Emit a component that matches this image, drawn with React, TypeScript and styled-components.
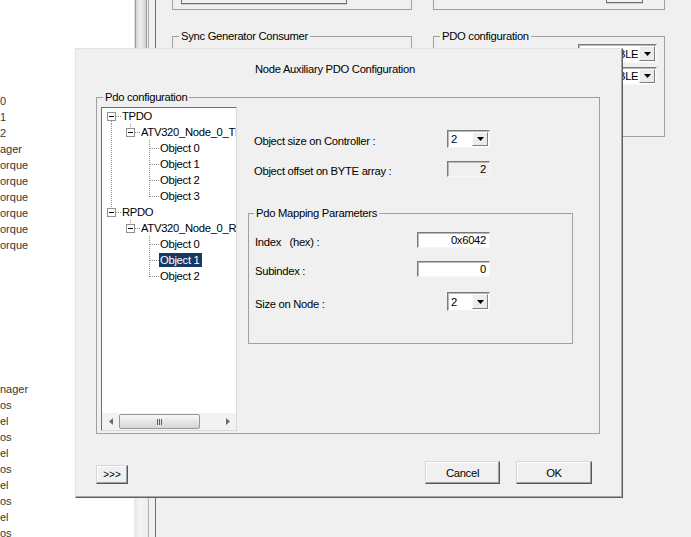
import React from 'react'
import styled, { createGlobalStyle } from 'styled-components'

const UI_FONT = '"Liberation Sans", Arial, sans-serif'

const GlobalStyle = createGlobalStyle`
  html, body {
    margin: 0;
    padding: 0;
    overflow: hidden;
    background: #ffffff;
  }
  body {
    font-family: ${UI_FONT};
    font-size: 11.25px;
    letter-spacing: -0.3px;
    line-height: 14px;
    color: #000;
  }
  * {
    box-sizing: border-box;
  }
`

type Seg = { up?: boolean; down?: boolean; right?: boolean; box?: boolean }

const BLANK: Seg = {}
const PIPE: Seg = { up: true, down: true }
const TEE: Seg = { up: true, down: true, right: true }
const ELBOW: Seg = { up: true, right: true }

const treeRows: { label: string; cells: Seg[]; selected?: boolean }[] = [
  { label: 'TPDO', cells: [{ box: true, down: true, right: true }] },
  { label: 'ATV320_Node_0_TPDO', cells: [PIPE, { box: true, up: true, right: true }] },
  { label: 'Object 0', cells: [PIPE, BLANK, TEE] },
  { label: 'Object 1', cells: [PIPE, BLANK, TEE] },
  { label: 'Object 2', cells: [PIPE, BLANK, TEE] },
  { label: 'Object 3', cells: [PIPE, BLANK, ELBOW] },
  { label: 'RPDO', cells: [{ box: true, up: true, right: true }] },
  { label: 'ATV320_Node_0_RPDO', cells: [BLANK, { box: true, up: true, right: true }] },
  { label: 'Object 0', cells: [BLANK, BLANK, TEE] },
  { label: 'Object 1', cells: [BLANK, BLANK, TEE], selected: true },
  { label: 'Object 2', cells: [BLANK, BLANK, ELBOW] },
]

// what is left visible of the list behind the dialog
const listItems: string[] = [
  '0', '1', '2', 'ager',
  'orque', 'orque', 'orque', 'orque', 'orque', 'orque',
  '', '', '', '', '', '', '', '',
  'nager',
  'os', 'el', 'os', 'el', 'os', 'el', 'os', 'el', 'os',
]

const Screen = styled.div`
  position: relative;
  display: flex;
  width: 691px;
  height: 537px;
  overflow: hidden;
`

const ItemList = styled.div`
  width: 134px;
  flex: none;
  padding-top: 93px;
  background: #ffffff;
  font-family: "Liberation Sans", Arial, sans-serif;
  font-size: 11px;
  letter-spacing: 0;
  color: #363636;
`

const ListRow = styled.div`
  height: 16px;
  line-height: 16px;
  white-space: nowrap;
`

const ScrollColumn = styled.div`
  width: 15px;
  flex: none;
  display: flex;
  flex-direction: column;
  background: linear-gradient(to right, #e6e6e6, #f5f5f5 45%, #ebebeb);
  border-right: 1px solid #b0b0b0;
`

const ScrollThumb = styled.div`
  height: 260px;
  margin: 0 1px;
  background: linear-gradient(to right, #d4d4d4, #eeeeee 45%, #cfcfcf);
  border: 1px solid #9a9a9a;
  border-top: none;
`

const Sash = styled.div`
  width: 7px;
  flex: none;
  background: #f0f0f0;
  border-right: 1px solid #6b6b6b;
`

const Workspace = styled.div`
  flex: 1;
  background: #f0f0f0;
  padding-left: 16px;
  display: grid;
  grid-template-columns: 240px 232px;
  grid-template-rows: 10px auto;
  column-gap: 21px;
  row-gap: 19px;
  align-content: start;
`

const ClippedBox = styled.div`
  display: flex;
  align-items: flex-start;
  border: 1px solid #a0a0a0;
  border-top: none;
`

const ClippedControl = styled.div<{ $left: number; $width: number; $height: number }>`
  margin-left: ${p => p.$left}px;
  width: ${p => p.$width}px;
  height: ${p => p.$height}px;
  background: #f0f0f0;
  border: 1px solid #6f6f6f;
  border-top: none;
  box-shadow: 0 1px 0 #cfcfcf;
`

const GroupBox = styled.fieldset<{ $pad: string; $width?: number; $height?: number }>`
  margin: 0;
  min-width: 0;
  padding: ${p => p.$pad};
  border: 1px solid #a0a0a0;
  ${p => (p.$width ? `width: ${p.$width}px;` : '')}
  ${p => (p.$height ? `height: ${p.$height}px;` : '')}
`

// legend offset is measured from the fieldset's content edge
const GroupTitle = styled.legend<{ $indent: number }>`
  margin-left: ${p => p.$indent}px;
  padding: 0 2px;
  line-height: 14px;
`

const ComboStack = styled.div`
  display: flex;
  flex-direction: column;
  align-items: flex-end;
  gap: 4px;
`

const ComboFrame = styled.div<{ $w: number; $h: number }>`
  display: flex;
  width: ${p => p.$w}px;
  height: ${p => p.$h}px;
  background: #ffffff;
  border: 1px solid;
  border-color: #7a7a7a #f6f6f6 #f6f6f6 #7a7a7a;
  box-shadow: inset 1px 1px 0 #b8b8b8;
`

const ComboText = styled.span`
  flex: 1;
  align-self: center;
  padding-left: 3px;
  overflow: hidden;
  white-space: nowrap;
`

const DropButton = styled.span`
  width: 16px;
  flex: none;
  margin: 1px;
  display: flex;
  align-items: center;
  justify-content: center;
  background: #ececec;
  border: 1px solid;
  border-color: #fdfdfd #7d7d7d #7d7d7d #fdfdfd;
`

const TextField = styled.div<{ $w: number; $h: number; $readOnly?: boolean }>`
  width: ${p => p.$w}px;
  height: ${p => p.$h}px;
  line-height: ${p => p.$h - 2}px;
  padding-right: 3px;
  text-align: right;
  background: ${p => (p.$readOnly ? '#f0f0f0' : '#ffffff')};
  border: 1px solid;
  border-color: #7a7a7a #f6f6f6 #f6f6f6 #7a7a7a;
  box-shadow: inset 1px 1px 0 #b8b8b8;
`

const Dialog = styled.div`
  position: absolute;
  left: 75px;
  top: 48px;
  width: 548px;
  height: 450px;
  display: flex;
  flex-direction: column;
  background: #f0f0f0;
  border: 1px solid;
  border-color: #e2e2e2 #5f5f5f #5f5f5f #e2e2e2;
  box-shadow: inset -1px -1px 0 #a8a8a8;
`

const DialogTitle = styled.div`
  margin-top: 13px;
  padding-left: 179px;
  white-space: nowrap;
`

const ConfigGroup = styled(GroupBox)`
  margin: 14px 22px 0 20px;
  display: flex;
`

const TreeView = styled.div`
  width: 136px;
  height: 324px;
  flex: none;
  display: flex;
  flex-direction: column;
  background: #ffffff;
  border: 1px solid;
  border-color: #6e6e6e #dadada #dadada #6e6e6e;
`

const TreeBody = styled.div`
  flex: 1;
  overflow: hidden;
`

const TreeRow = styled.div`
  display: flex;
  align-items: center;
  height: 16px;
  white-space: nowrap;
`

const GlyphSvg = styled.svg`
  display: block;
  flex: none;
`

const TreeLabel = styled.span<{ $selected?: boolean }>`
  flex: none;
  height: 14px;
  line-height: 14px;
  padding: 0 2px 0 1px;
  background: ${p => (p.$selected ? '#163a64' : 'transparent')};
  color: ${p => (p.$selected ? '#ffffff' : '#000000')};
`

const HScroll = styled.div`
  height: 17px;
  flex: none;
  display: flex;
  background: #f2f2f2;
`

const ScrollArrow = styled.span`
  width: 17px;
  flex: none;
  display: flex;
  align-items: center;
  justify-content: center;
`

const ScrollTrack = styled.div`
  flex: 1;
  display: flex;
  padding: 1px 0;
`

const HThumb = styled.div`
  width: 81px;
  display: flex;
  align-items: center;
  justify-content: center;
  gap: 1px;
  border: 1px solid #979797;
  border-radius: 2px;
  background: linear-gradient(#f8f8f8, #e6e6e6 50%, #d6d6d6);
`

const Grip = styled.span`
  width: 1px;
  height: 6px;
  background: #5a5a5a;
`

const FormArea = styled.div`
  flex: 1;
  display: flex;
  flex-direction: column;
  margin-left: 11px;
  padding-top: 23px;
`

const FormRow = styled.div<{ $gap: number; $indent: number; $width: number }>`
  display: grid;
  grid-template-columns: 1fr auto;
  align-items: start;
  margin-top: ${p => p.$gap}px;
  margin-left: ${p => p.$indent}px;
  width: ${p => p.$width}px;
`

const FieldLabel = styled.span<{ $drop: number }>`
  margin-top: ${p => p.$drop}px;
  white-space: pre;
`

const MappingGroup = styled(GroupBox)`
  margin-top: 28px;
`

const DialogFooter = styled.div`
  margin-top: auto;
  display: flex;
  align-items: flex-end;
  padding: 0 30px 13px 20px;
`

const PushButton = styled.button<{ $w: number; $h: number; $push?: boolean; $small?: boolean }>`
  width: ${p => p.$w}px;
  height: ${p => p.$h}px;
  margin-left: ${p => (p.$push ? 'auto' : '16px')};
  padding: 0;
  font-family: ${UI_FONT};
  font-size: ${p => (p.$small ? '10px' : '11.25px')};
  letter-spacing: ${p => (p.$small ? '0' : '-0.3px')};
  color: #000;
  background: #f0f0f0;
  border: 1px solid;
  border-color: #d6d6d6 #575757 #575757 #d6d6d6;
  box-shadow: inset -1px -1px 0 #a0a0a0, inset 1px 1px 0 #ffffff;

  &:first-child {
    margin-left: 0;
  }
`

const DownTriangle = () => (
  <svg width="7" height="4" viewBox="0 0 7 4">
    <path d="M0 0h7L3.5 4z" fill="#000" />
  </svg>
)

const Combo = ({ value, w, h }: { value: string; w: number; h: number }) => (
  <ComboFrame $w={w} $h={h}>
    <ComboText>{value}</ComboText>
    <DropButton>
      <DownTriangle />
    </DropButton>
  </ComboFrame>
)

const TreeGlyph = ({ seg }: { seg: Seg }) => {
  const c = 9.5
  const m = 8.5
  return (
    <GlyphSvg width="19" height="16" viewBox="0 0 19 16" shapeRendering="crispEdges">
      <g stroke="#8e8e8e" strokeWidth="1" strokeDasharray="1 1">
        {seg.up && <line x1={c} y1={0} x2={c} y2={seg.box ? 4 : 9} />}
        {seg.down && <line x1={c} y1={seg.box ? 13 : 8} x2={c} y2={16} />}
        {seg.right && <line x1={seg.box ? 14 : 10} y1={m} x2={19} y2={m} />}
      </g>
      {seg.box && (
        <>
          <rect x="5.5" y="4.5" width="8" height="8" fill="#fff" stroke="#919191" />
          <line x1="7" y1={m} x2="12" y2={m} stroke="#000" />
        </>
      )}
    </GlyphSvg>
  )
}

const ArrowGlyph = ({ dir }: { dir: 'left' | 'right' }) => (
  <svg width="4" height="7" viewBox="0 0 4 7">
    <path d={dir === 'left' ? 'M4 0v7L0 3.5z' : 'M0 0v7l4-3.5z'} fill="#6a6a6a" />
  </svg>
)

const PdoTree = () => (
  <TreeView>
    <TreeBody>
      {treeRows.map((row, i) => (
        <TreeRow key={i}>
          {row.cells.map((seg, j) => (
            <TreeGlyph key={j} seg={seg} />
          ))}
          <TreeLabel $selected={row.selected}>{row.label}</TreeLabel>
        </TreeRow>
      ))}
    </TreeBody>
    <HScroll>
      <ScrollArrow>
        <ArrowGlyph dir="left" />
      </ScrollArrow>
      <ScrollTrack>
        <HThumb>
          <Grip />
          <Grip />
          <Grip />
        </HThumb>
      </ScrollTrack>
      <ScrollArrow>
        <ArrowGlyph dir="right" />
      </ScrollArrow>
    </HScroll>
  </TreeView>
)

const PdoDialog = () => (
  <Dialog>
    <DialogTitle>Node Auxiliary PDO Configuration</DialogTitle>
    <ConfigGroup $pad="3px 2px 2px 4px">
      <GroupTitle $indent={2}>Pdo configuration</GroupTitle>
      <PdoTree />
      <FormArea>
        <FormRow $gap={0} $indent={6} $width={236}>
          <FieldLabel $drop={4}>Object size on Controller :</FieldLabel>
          <Combo value="2" w={43} h={18} />
        </FormRow>
        <FormRow $gap={13} $indent={6} $width={236}>
          <FieldLabel $drop={3}>Object offset on BYTE array :</FieldLabel>
          <TextField $w={43} $h={16} $readOnly>2</TextField>
        </FormRow>
        <MappingGroup $pad="12px 0 32px 6px" $width={325}>
          <GroupTitle $indent={-1}>Pdo Mapping Parameters</GroupTitle>
          <FormRow $gap={0} $indent={0} $width={235}>
            <FieldLabel $drop={3}>{'Index   (hex) :'}</FieldLabel>
            <TextField $w={73} $h={16}>0x6042</TextField>
          </FormRow>
          <FormRow $gap={12} $indent={0} $width={235}>
            <FieldLabel $drop={3}>Subindex :</FieldLabel>
            <TextField $w={73} $h={16}>0</TextField>
          </FormRow>
          <FormRow $gap={14} $indent={0} $width={235}>
            <FieldLabel $drop={5}>Size on Node :</FieldLabel>
            <Combo value="2" w={43} h={19} />
          </FormRow>
        </MappingGroup>
      </FormArea>
    </ConfigGroup>
    <DialogFooter>
      <PushButton $w={32} $h={19} $small>{'>>>'}</PushButton>
      <PushButton $w={75} $h={23} $push>Cancel</PushButton>
      <PushButton $w={76} $h={23}>OK</PushButton>
    </DialogFooter>
  </Dialog>
)

export default function App() {
  return (
    <>
      <GlobalStyle />
      <Screen>
        <ItemList>
          {listItems.map((text, i) => (
            <ListRow key={i}>{text}</ListRow>
          ))}
        </ItemList>
        <ScrollColumn>
          <ScrollThumb />
        </ScrollColumn>
        <Sash />
        <Workspace>
          <ClippedBox>
            <ClippedControl $left={8} $width={166} $height={4} />
          </ClippedBox>
          <ClippedBox>
            <ClippedControl $left={172} $width={37} $height={3} />
          </ClippedBox>
          <GroupBox $pad="4px 0" $height={140}>
            <GroupTitle $indent={6}>Sync Generator Consumer</GroupTitle>
          </GroupBox>
          <GroupBox $pad="1px 7px 50px 0" $height={108}>
            <GroupTitle $indent={6}>PDO configuration</GroupTitle>
            <ComboStack>
              <Combo value="AVAILABLE" w={79} h={19} />
              <Combo value="AVAILABLE" w={79} h={18} />
            </ComboStack>
          </GroupBox>
        </Workspace>
        <PdoDialog />
      </Screen>
    </>
  )
}
